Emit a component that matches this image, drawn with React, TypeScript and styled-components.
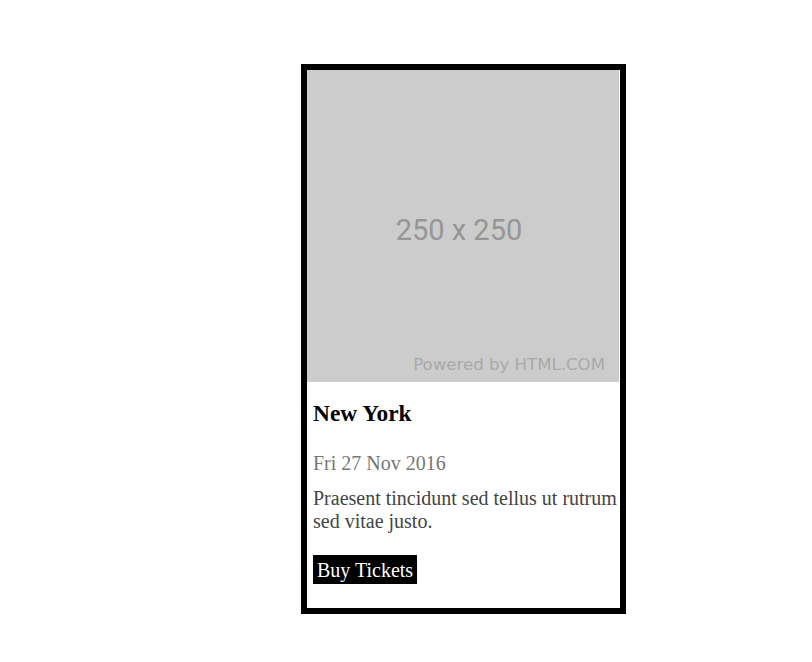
import styled, { createGlobalStyle } from 'styled-components';

const GlobalStyle = createGlobalStyle`
  body {
    margin: 0;
    background: #fff;
    font-family: "Liberation Serif", "Times New Roman", serif;
  }
`;

const Page = styled.div`
  padding: 64px 0 0 301px;
`;

const Card = styled.div`
  width: 313px;
  border: 6px solid #000;
  background: #fff;
`;

const Placeholder = styled.div`
  width: 312px;
  height: 312px;
  background: #ccc;
  display: flex;
  flex-direction: column;
`;

const PlaceholderLabel = styled.div`
  flex: 1;
  display: flex;
  align-items: center;
  justify-content: center;
  padding: 34px 8px 0 0;
  font-family: Roboto, "Liberation Sans", Arial, sans-serif;
  font-size: 29px;
  color: #969696;
`;

const Watermark = styled.div`
  align-self: flex-end;
  margin: 0 14px 8px 0;
  font-family: "DejaVu Sans", Verdana, sans-serif;
  font-size: 16.6px;
  line-height: 19px;
  color: #a9a9a9;
`;

const Body = styled.div`
  padding: 18px 2px 24px 6px;
`;

const City = styled.h3`
  margin: 0;
  font-size: 23.4px;
  line-height: 26px;
  font-weight: bold;
  color: #000;
`;

const EventDate = styled.p`
  margin: 26px 0 0;
  font-size: 20px;
  line-height: 23px;
  color: #777;
`;

const Blurb = styled.p`
  margin: 12px 0 0;
  font-size: 20px;
  line-height: 23px;
  color: #444;
`;

const BuyButton = styled.button`
  display: inline-block;
  margin-top: 22px;
  padding: 4px 4px 2px;
  border: none;
  background: #000;
  color: #fff;
  font-family: inherit;
  font-size: 20px;
  line-height: 23px;
  cursor: pointer;
`;

export default function App() {
  return (
    <Page>
      <GlobalStyle />
      <Card>
        <Placeholder>
          <PlaceholderLabel>250 x 250</PlaceholderLabel>
          <Watermark>Powered by HTML.COM</Watermark>
        </Placeholder>
        <Body>
          <City>New York</City>
          <EventDate>Fri 27 Nov 2016</EventDate>
          <Blurb>Praesent tincidunt sed tellus ut rutrum sed vitae justo.</Blurb>
          <BuyButton>Buy Tickets</BuyButton>
        </Body>
      </Card>
    </Page>
  );
}
